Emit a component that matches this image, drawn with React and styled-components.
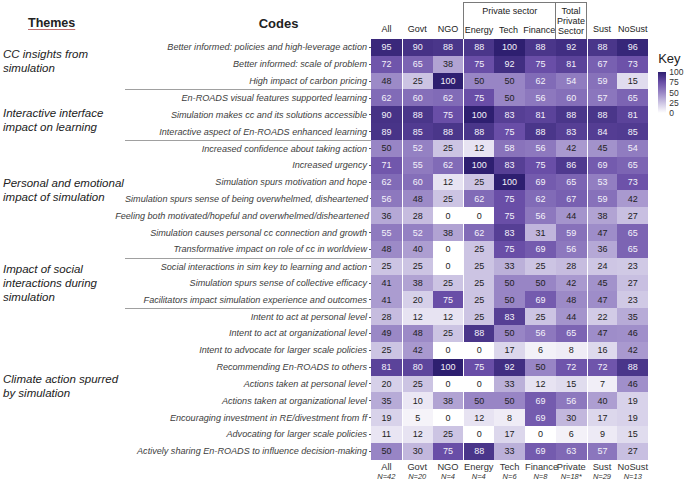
import React from 'react';
import styled, { createGlobalStyle } from 'styled-components';

const COLUMNS = [
  { key: 'All', n: 'N=42' },
  { key: 'Govt', n: 'N=20' },
  { key: 'NGO', n: 'N=4' },
  { key: 'Energy', n: 'N=4' },
  { key: 'Tech', n: 'N=6' },
  { key: 'Finance', n: 'N=8' },
  { key: 'Private', n: 'N=18*' },
  { key: 'Sust', n: 'N=29' },
  { key: 'NoSust', n: 'N=13' },
];

// columns that get a white divider on their left edge
const SPLITS = [1, 3, 7];

const ROWS = [
  ['Better informed: policies and high-leverage action', 95, 90, 88, 88, 100, 88, 92, 88, 96],
  ['Better informed: scale of problem', 72, 65, 38, 75, 92, 75, 81, 67, 73],
  ['High impact of carbon pricing', 48, 25, 100, 50, 50, 62, 54, 59, 15],
  ['En-ROADS visual features supported learning', 62, 60, 62, 75, 50, 56, 60, 57, 65],
  ['Simulation makes cc and its solutions accessible', 90, 88, 75, 100, 83, 81, 88, 88, 81],
  ['Interactive aspect of En-ROADS enhanced learning', 89, 85, 88, 88, 75, 88, 83, 84, 85],
  ['Increased confidence about taking action', 50, 52, 25, 12, 58, 56, 42, 45, 54],
  ['Increased urgency', 71, 55, 62, 100, 83, 75, 86, 69, 65],
  ['Simulation spurs motivation and hope', 62, 60, 12, 25, 100, 69, 65, 53, 73],
  ['Simulation spurs sense of being overwhelmed, disheartened', 56, 48, 25, 62, 75, 62, 67, 59, 42],
  ['Feeling both motivated/hopeful and overwhelmed/disheartened', 36, 28, 0, 0, 75, 56, 44, 38, 27],
  ['Simulation causes personal cc connection and growth', 55, 52, 38, 62, 83, 31, 59, 47, 65],
  ['Transformative impact on role of cc in worldview', 48, 40, 0, 25, 75, 69, 56, 36, 65],
  ['Social interactions in sim key to learning and action', 25, 25, 0, 25, 33, 25, 28, 24, 23],
  ['Simulation spurs sense of collective efficacy', 41, 38, 25, 25, 50, 50, 42, 45, 27],
  ['Facilitators impact simulation experience and outcomes', 41, 20, 75, 25, 50, 69, 48, 47, 23],
  ['Intent to act at personal level', 28, 12, 12, 25, 83, 25, 44, 22, 35],
  ['Intent to act at organizational level', 49, 48, 25, 88, 50, 56, 65, 47, 46],
  ['Intent to advocate for larger scale policies', 25, 42, 0, 0, 17, 6, 8, 16, 42],
  ['Recommending En-ROADS to others', 81, 80, 100, 75, 92, 50, 72, 72, 88],
  ['Actions taken at personal level', 20, 25, 0, 0, 33, 12, 15, 7, 46],
  ['Actions taken at organizational level', 35, 10, 38, 50, 50, 69, 56, 40, 19],
  ['Encouraging investment in RE/divestment from ff', 19, 5, 0, 12, 8, 69, 30, 17, 19],
  ['Advocating for larger scale policies', 11, 12, 25, 0, 17, 0, 6, 9, 15],
  ['Actively sharing En-ROADS to influence decision-making', 50, 30, 75, 88, 33, 69, 63, 57, 27],
];

// first row index of every theme group (a rule is drawn above it)
const RULES = [3, 6, 13, 16];

// dy: how far the label sits below (+) or above (-) the middle of its rows
const THEMES = [
  { lines: ['CC insights from', 'simulation'], start: 0, span: 3, dy: -3 },
  { lines: ['Interactive interface', 'impact on learning'], start: 3, span: 3, dy: 5 },
  { lines: ['Personal and emotional', 'impact of simulation'], start: 6, span: 7, dy: -9 },
  { lines: ['Impact of social', 'interactions during', 'simulation'], start: 13, span: 3, dy: 0 },
  { lines: ['Climate action spurred', 'by simulation'], start: 16, span: 9, dy: 2 },
];

const STOPS = [
  [0, [255, 255, 255]],
  [25, [204, 196, 227]],
  [50, [152, 133, 197]],
  [75, [105, 78, 167]],
  [100, [46, 31, 112]],
];

const fill = (v) => {
  for (let i = 1; i < STOPS.length; i++) {
    const [hi, c1] = STOPS[i];
    const [lo, c0] = STOPS[i - 1];
    if (v <= hi) {
      const t = (v - lo) / (hi - lo);
      const c = c0.map((x, k) => Math.round(x + (c1[k] - x) * t));
      return `rgb(${c.join(',')})`;
    }
  }
  return 'rgb(46,31,112)';
};

const App = () => (
  <>
    <GlobalStyle />
    <Page>
      <ThemesHead>Themes</ThemesHead>
      <CodesHead>Codes</CodesHead>

      {[0, 1, 2].map((c) => (
        <ColHead key={c} style={{ gridColumn: c + 3 }}>{COLUMNS[c].key}</ColHead>
      ))}
      <PrivateBox>
        <SectorGroup>
          <SectorTitle>Private sector</SectorTitle>
          <SectorLabels>
            <span>Energy</span>
            <span>Tech</span>
            <span>Finance</span>
          </SectorLabels>
        </SectorGroup>
        <TotalGroup>Total<br />Private<br />Sector</TotalGroup>
      </PrivateBox>
      {[7, 8].map((c) => (
        <ColHead key={c} style={{ gridColumn: c + 3 }}>{COLUMNS[c].key}</ColHead>
      ))}

      <KeyBlock>
        <KeyTitle>Key</KeyTitle>
        <KeyScale>
          <KeyBar />
          <KeyLabels>
            <span>100</span>
            <span>75</span>
            <span>50</span>
            <span>25</span>
            <span>0</span>
          </KeyLabels>
        </KeyScale>
      </KeyBlock>

      {THEMES.map((t) => (
        <Theme
          key={t.start}
          $dy={t.dy}
          style={{ gridRow: `${t.start + 2} / span ${t.span}` }}
        >
          {t.lines.map((l) => (
            <div key={l}>{l}</div>
          ))}
        </Theme>
      ))}

      {ROWS.map(([label, ...vals], r) => (
        <React.Fragment key={label}>
          <Code $rule={RULES.includes(r)} style={{ gridRow: r + 2 }}>
            <span>{label}</span>
            <Tick />
          </Code>
          {vals.map((v, c) => (
            <Cell
              key={c}
              $split={SPLITS.includes(c)}
              $light={v > 50}
              style={{ gridRow: r + 2, gridColumn: c + 3, background: fill(v) }}
            >
              {v}
            </Cell>
          ))}
        </React.Fragment>
      ))}

      {COLUMNS.map((col, c) => (
        <Foot key={col.key} style={{ gridColumn: c + 3 }}>
          <div>{col.key}</div>
          <FootN>{col.n}</FootN>
        </Foot>
      ))}
    </Page>
  </>
);

export default App;

const GlobalStyle = createGlobalStyle`
  html, body {
    margin: 0;
    padding: 0;
    background: #fff;
  }
  body {
    font-family: "Liberation Sans", Arial, sans-serif;
    color: #222;
  }
`;

const Page = styled.div`
  width: 685px;
  height: 481px;
  display: grid;
  grid-template-columns: 120px 251px repeat(9, 30.8px) 1fr;
  grid-template-rows: 39px repeat(25, 16.84px) 21px;
  overflow: hidden;
`;

const ThemesHead = styled.div`
  grid-column: 1;
  grid-row: 1;
  padding: 16px 0 0 28px;
  font-size: 12.5px;
  font-weight: bold;
  text-decoration: underline;
  text-decoration-color: #c07070;
  text-underline-offset: 2px;
`;

const CodesHead = styled.div`
  grid-column: 2;
  grid-row: 1;
  padding: 16px 0 0 66px;
  text-align: center;
  font-size: 13px;
  font-weight: bold;
`;

const ColHead = styled.div`
  grid-row: 1;
  display: flex;
  align-items: flex-end;
  justify-content: center;
  padding-bottom: 5px;
  font-size: 9px;
  line-height: 10px;
  color: #222;
`;

const PrivateBox = styled.div`
  grid-column: 6 / span 4;
  grid-row: 1;
  margin: 2px 0 0;
  border: 1px solid #7a7a7a;
  border-bottom: none;
  display: grid;
  grid-template-columns: 3fr 1fr;
`;

const SectorGroup = styled.div`
  display: flex;
  flex-direction: column;
  justify-content: space-between;
  padding: 3px 0 4px;
`;

const SectorTitle = styled.div`
  text-align: center;
  font-size: 9px;
  line-height: 10px;
`;

const SectorLabels = styled.div`
  display: grid;
  grid-template-columns: repeat(3, 1fr);
  font-size: 9px;
  line-height: 10px;
  text-align: center;
  white-space: nowrap;
`;

const TotalGroup = styled.div`
  border-left: 1px solid #7a7a7a;
  padding-top: 3px;
  text-align: center;
  font-size: 9px;
  line-height: 10px;
`;

const KeyBlock = styled.div`
  grid-column: 12;
  grid-row: 2 / span 6;
  padding: 12px 0 0 10px;
`;

const KeyTitle = styled.div`
  font-size: 13px;
  line-height: 15px;
  margin-bottom: 6px;
`;

const KeyScale = styled.div`
  display: flex;
  gap: 3px;
`;

const KeyBar = styled.div`
  width: 8px;
  height: 41px;
  background: linear-gradient(
    to bottom,
    rgb(46, 31, 112),
    rgb(105, 78, 167) 25%,
    rgb(152, 133, 197) 50%,
    rgb(204, 196, 227) 75%,
    #fff
  );
`;

const KeyLabels = styled.div`
  display: flex;
  flex-direction: column;
  margin-top: -5px;
  font-size: 8.5px;
  line-height: 10.25px;
  color: #333;
`;

const Theme = styled.div`
  grid-column: 1;
  align-self: center;
  padding: ${(p) => Math.max(p.$dy, 0) * 2}px 0 ${(p) => Math.max(-p.$dy, 0) * 2}px 3px;
  font-size: 11.5px;
  line-height: 14px;
  font-style: italic;
  color: #222;
  white-space: nowrap;
`;

const Code = styled.div`
  grid-column: 2;
  margin-left: 5px;
  display: flex;
  align-items: center;
  justify-content: flex-end;
  gap: 2px;
  border-top: ${(p) => (p.$rule ? '1.5px solid #a0a0a0' : 'none')};
  font-size: 9.1px;
  font-style: italic;
  color: #404040;
  white-space: nowrap;
`;

const Tick = styled.i`
  width: 2px;
  height: 1px;
  background: #555;
`;

const Cell = styled.div`
  display: flex;
  align-items: center;
  justify-content: center;
  border-left: ${(p) => (p.$split ? '1.5px solid #fff' : 'none')};
  font-size: 9px;
  color: ${(p) => (p.$light ? '#f4f2fa' : '#222')};
`;

const Foot = styled.div`
  grid-row: 27;
  text-align: center;
  font-size: 9.3px;
  line-height: 11px;
  color: #333;
  white-space: nowrap;
  padding-top: 2px;
`;

const FootN = styled.div`
  font-size: 7.5px;
  line-height: 8px;
  font-style: italic;
`;
